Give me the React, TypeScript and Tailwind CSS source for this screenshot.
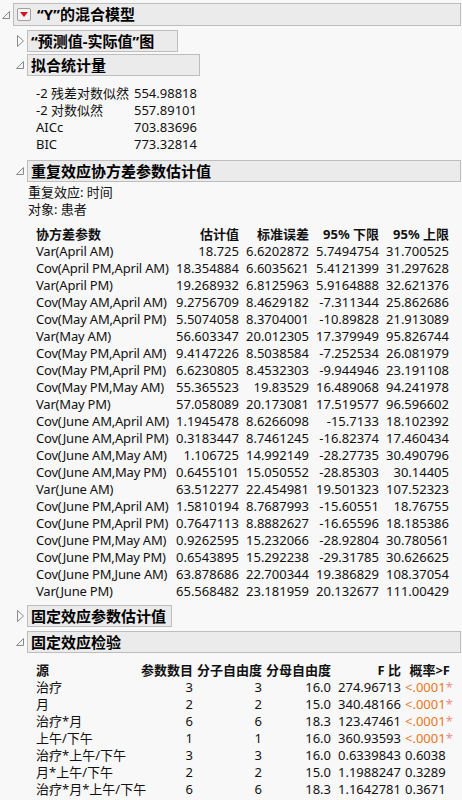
import React from "react";

const font = { fontFamily: '"Noto Sans", "Noto Sans CJK SC", sans-serif' };

const covRows = [
  ["Var(April AM)", "18.725", "6.6202872", "5.7494754", "31.700525"],
  ["Cov(April PM,April AM)", "18.354884", "6.6035621", "5.4121399", "31.297628"],
  ["Var(April PM)", "19.268932", "6.8125963", "5.9164888", "32.621376"],
  ["Cov(May AM,April AM)", "9.2756709", "8.4629182", "-7.311344", "25.862686"],
  ["Cov(May AM,April PM)", "5.5074058", "8.3704001", "-10.89828", "21.913089"],
  ["Var(May AM)", "56.603347", "20.012305", "17.379949", "95.826744"],
  ["Cov(May PM,April AM)", "9.4147226", "8.5038584", "-7.252534", "26.081979"],
  ["Cov(May PM,April PM)", "6.6230805", "8.4532303", "-9.944946", "23.191108"],
  ["Cov(May PM,May AM)", "55.365523", "19.83529", "16.489068", "94.241978"],
  ["Var(May PM)", "57.058089", "20.173081", "17.519577", "96.596602"],
  ["Cov(June AM,April AM)", "1.1945478", "8.6266098", "-15.7133", "18.102392"],
  ["Cov(June AM,April PM)", "0.3183447", "8.7461245", "-16.82374", "17.460434"],
  ["Cov(June AM,May AM)", "1.106725", "14.992149", "-28.27735", "30.490796"],
  ["Cov(June AM,May PM)", "0.6455101", "15.050552", "-28.85303", "30.14405"],
  ["Var(June AM)", "63.512277", "22.454981", "19.501323", "107.52323"],
  ["Cov(June PM,April AM)", "1.5810194", "8.7687993", "-15.60551", "18.76755"],
  ["Cov(June PM,April PM)", "0.7647113", "8.8882627", "-16.65596", "18.185386"],
  ["Cov(June PM,May AM)", "0.9262595", "15.232066", "-28.92804", "30.780561"],
  ["Cov(June PM,May PM)", "0.6543895", "15.292238", "-29.31785", "30.626625"],
  ["Cov(June PM,June AM)", "63.878686", "22.700344", "19.386829", "108.37054"],
  ["Var(June PM)", "65.568482", "23.181959", "20.132677", "111.00429"],
];

const fixedRows = [
  ["治疗", "3", "3", "16.0", "274.96713", "<.0001", true],
  ["月", "2", "2", "15.0", "340.48166", "<.0001", true],
  ["治疗*月", "6", "6", "18.3", "123.47461", "<.0001", true],
  ["上午/下午", "1", "1", "16.0", "360.93593", "<.0001", true],
  ["治疗*上午/下午", "3", "3", "16.0", "0.6339843", "0.6038", false],
  ["月*上午/下午", "2", "2", "15.0", "1.1988247", "0.3289", false],
  ["治疗*月*上午/下午", "6", "6", "18.3", "1.1642781", "0.3671", false],
] as const;

const OpenTri = () => (
  <svg width="8" height="8" viewBox="0 0 8 8" className="shrink-0">
    <path d="M7.5 0.5 L7.5 7.5 L0.5 7.5 Z" fill="#f4f4f4" stroke="#8a8a8a" strokeWidth="1" />
  </svg>
);

const ClosedTri = () => (
  <svg width="7" height="12" viewBox="0 0 7 12" className="shrink-0">
    <path d="M0.5 0.5 L6.5 6 L0.5 11.5 Z" fill="#f8f8f8" stroke="#8a8a8a" strokeWidth="1" />
  </svg>
);

const Section = ({ open, title, w }: { open: boolean; title: string; w: string }) => (
  <div className="flex items-center">
    <div className="w-[27px] flex justify-end pr-[3px]">{open ? <OpenTri /> : <ClosedTri />}</div>
    <div className={`${w} h-[22px] bg-[#ebebeb] border border-[#bdbdbd] flex items-center pl-[3px] text-[15px] font-bold text-black`}>
      {title}
    </div>
  </div>
);

export default function App() {
  return (
    <div className="w-[462px] h-[800px] bg-[#f8f8f8] text-[13px] text-[#111] overflow-hidden" style={font}>
      {/* top header */}
      <div className="flex items-center pt-[3px]">
        <div className="w-[13px] flex justify-end pr-[3px]"><OpenTri /></div>
        <div className="w-[448px] h-[23px] bg-[#ebebeb] border border-[#bdbdbd] flex items-center pl-[3px] gap-[6px]">
          <div className="w-[14px] h-[13px] border border-[#a0a0a0] bg-[#f4f4f4] rounded-[2px] flex items-center justify-center">
            <svg width="8" height="5" viewBox="0 0 8 5"><path d="M0 0 L8 0 L4 5 Z" fill="#d9131b" /></svg>
          </div>
          <span className="text-[15px] font-bold text-black">“Y”的混合模型</span>
        </div>
      </div>

      <div className="mt-[4px]"><Section open={false} title="“预测值-实际值”图" w="w-[151px]" /></div>
      <div className="mt-[2px]"><Section open={true} title="拟合统计量" w="w-[173px]" /></div>

      <div className="mt-[9px] pl-[36px]">
        {[
          ["-2 残差对数似然", "554.98818"],
          ["-2 对数似然", "557.89101"],
          ["AICc", "703.83696"],
          ["BIC", "773.32814"],
        ].map(([a, b]) => (
          <div key={a} className="flex h-[17px] items-center">
            <span className="w-[98px]">{a}</span>
            <span>{b}</span>
          </div>
        ))}
      </div>

      <div className="mt-[7px]"><Section open={true} title="重复效应协方差参数估计值" w="w-[434px]" /></div>
      <div className="pl-[28px] mt-[2px]">
        <div className="h-[17px] flex items-center">重复效应: 时间</div>
        <div className="h-[17px] flex items-center">对象: 患者</div>
      </div>

      <div className="mt-[7px] pl-[36px]">
        <div className="grid grid-cols-[133px_70px_70px_70px_70px] h-[17px] items-center font-bold">
          <span>协方差参数</span>
          <span className="text-right">估计值</span>
          <span className="text-right">标准误差</span>
          <span className="text-right">95% 下限</span>
          <span className="text-right">95% 上限</span>
        </div>
        {covRows.map((r) => (
          <div key={r[0]} className="grid grid-cols-[133px_70px_70px_70px_70px] h-[17px] items-center whitespace-nowrap">
            <span className="tracking-[-0.2px]">{r[0]}</span>
            <span className="text-right">{r[1]}</span>
            <span className="text-right">{r[2]}</span>
            <span className="text-right">{r[3]}</span>
            <span className="text-right">{r[4]}</span>
          </div>
        ))}
      </div>

      <div className="mt-[6px]"><Section open={false} title="固定效应参数估计值" w="w-[145px]" /></div>
      <div className="mt-[4px]"><Section open={true} title="固定效应检验" w="w-[434px]" /></div>

      <div className="mt-[8px] pl-[36px]">
        <div className="grid grid-cols-[100px_57px_69px_69px_70px_49px] h-[17px] items-center font-bold whitespace-nowrap">
          <span>源</span>
          <span className="text-right">参数数目</span>
          <span className="text-right">分子自由度</span>
          <span className="text-right">分母自由度</span>
          <span className="text-right">F 比</span>
          <span className="text-right">概率&gt;F</span>
        </div>
        {fixedRows.map((r) => (
          <div key={r[0]} className="grid grid-cols-[100px_57px_69px_69px_70px_49px] h-[17px] items-center whitespace-nowrap">
            <span>{r[0]}</span>
            <span className="text-right">{r[1]}</span>
            <span className="text-right">{r[2]}</span>
            <span className="text-right">{r[3]}</span>
            <span className="text-right">{r[4]}</span>
            <span className="pl-[4px]">
              {r[6] ? (
                <>
                  <span className="text-[#e8761e]">{r[5]}</span>
                  <span className="text-[#e8908a]">*</span>
                </>
              ) : (
                r[5]
              )}
            </span>
          </div>
        ))}
      </div>
    </div>
  );
}
